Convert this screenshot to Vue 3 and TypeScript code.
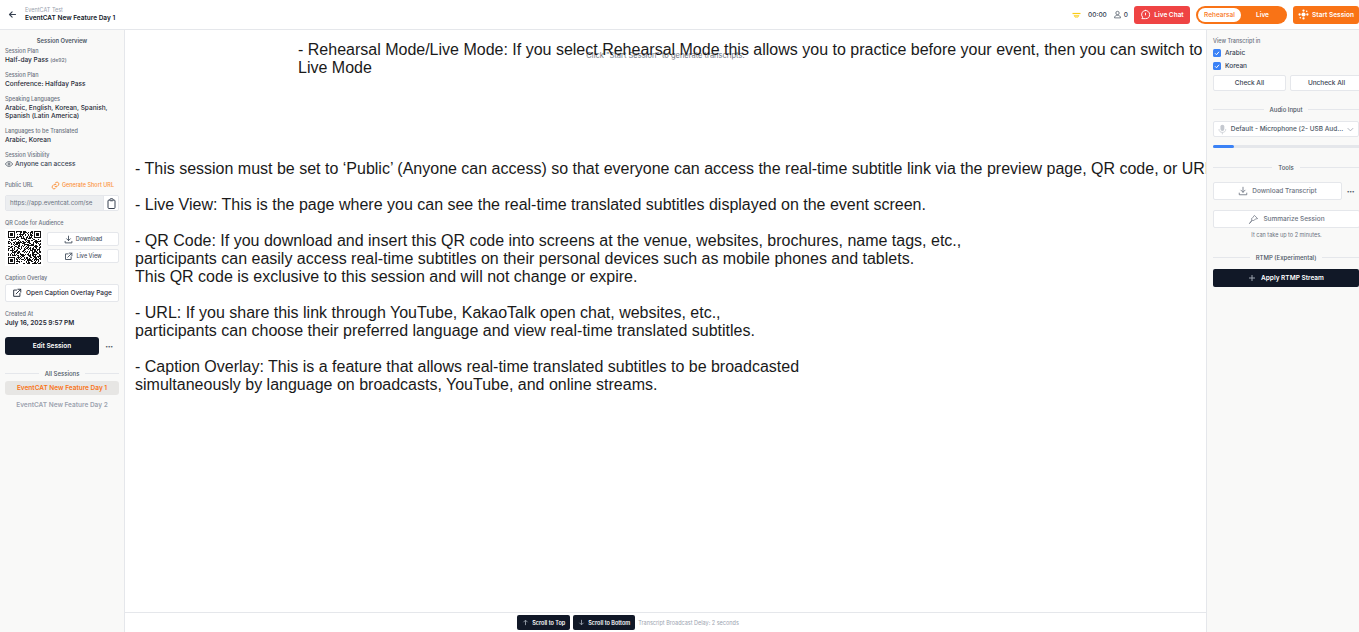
<script setup lang="ts">
const overview = [
  { label: 'Session Plan', value: 'Half-day Pass', note: '(de92)' },
  { label: 'Session Plan', value: 'Conference: Halfday Pass' },
  { label: 'Speaking Languages', value: 'Arabic, English, Korean, Spanish, Spanish (Latin America)' },
  { label: 'Languages to be Translated', value: 'Arabic, Korean' },
]

const sessions = ['EventCAT New Feature Day 1', 'EventCAT New Feature Day 2']
const transcriptLanguages = ['Arabic', 'Korean']

// not a real code, just something that reads as one at this size
const qrSize = 33

function inFinder(x: number, y: number, ox: number, oy: number) {
  return x >= ox && x < ox + 7 && y >= oy && y < oy + 7
}

function finderOn(x: number, y: number, ox: number, oy: number) {
  const dx = x - ox
  const dy = y - oy
  if (dx === 0 || dx === 6 || dy === 0 || dy === 6) return true
  return dx >= 2 && dx <= 4 && dy >= 2 && dy <= 4
}

const qrCells: Array<{ x: number; y: number }> = []
let seed = 92821
for (let y = 0; y < qrSize; y++) {
  for (let x = 0; x < qrSize; x++) {
    seed = (seed * 1103515245 + 12345) & 0x7fffffff
    let on = ((seed >> 16) & 3) < 2
    const finders: Array<[number, number]> = [[0, 0], [qrSize - 7, 0], [0, qrSize - 7]]
    for (const [ox, oy] of finders) {
      if (inFinder(x, y, ox, oy)) on = finderOn(x, y, ox, oy)
      else if (x >= ox - 1 && x <= ox + 7 && y >= oy - 1 && y <= oy + 7) on = false
    }
    if (on) qrCells.push({ x, y })
  }
}
</script>

<template>
  <div class="app">
    <header class="topbar">
      <button class="back" aria-label="Back">
        <svg width="9" height="9" viewBox="0 0 24 24" fill="none" stroke="#374151" stroke-width="3" stroke-linecap="round" stroke-linejoin="round"><path d="M20 12H4M11 5l-7 7 7 7" /></svg>
      </button>
      <div class="title">
        <span class="title__org">EventCAT Test</span>
        <strong class="title__name">EventCAT New Feature Day 1</strong>
      </div>
      <div class="topbar__right">
        <svg class="signal" width="9" height="6" viewBox="0 0 9 6"><path d="M0.5 1.5h8" stroke="#facc15" stroke-width="1.2" /><path d="M2 3.5h5L6 5.2H3z" fill="#fde68a" stroke="#facc15" stroke-width=".6" /></svg>
        <span class="timer">00:00</span>
        <span class="viewers">
          <svg width="9" height="9" viewBox="0 0 24 24" fill="none" stroke="#4b5563" stroke-width="2"><circle cx="12" cy="8" r="4.5" /><path d="M4 21c0-4.5 3.5-7 8-7s8 2.500 8 7z" /></svg>
          0
        </span>
        <button class="btn-chat">
          <svg width="11" height="11" viewBox="0 0 24 24" fill="none" stroke="#fff" stroke-width="2" stroke-linecap="round"><path d="M12 3a9 9 0 0 1 0 18H4l1.800-3A9 9 0 0 1 12 3z" /><path d="M12 9v4" /></svg>
          Live Chat
        </button>
        <div class="mode">
          <span class="mode__on">Rehearsal</span>
          <span class="mode__off">Live</span>
        </div>
        <button class="btn-start">
          <svg width="11" height="11" viewBox="0 0 24 24" fill="#fff"><circle cx="12" cy="12" r="4.500" /><circle cx="12" cy="3.500" r="2.500" /><circle cx="12" cy="20.500" r="2.500" /><circle cx="3.500" cy="12" r="2.500" /><circle cx="20.500" cy="12" r="2.500" /><circle cx="19" cy="5" r="1.800" /><circle cx="5" cy="19" r="1.800" /></svg>
          Start Session
        </button>
      </div>
    </header>

    <div class="body">
      <aside class="left">
        <h3 class="left__title">Session Overview</h3>

        <div v-for="(item, i) in overview" :key="i" class="info">
          <span class="label">{{ item.label }}</span>
          <p class="value">{{ item.value }} <small v-if="item.note">{{ item.note }}</small></p>
        </div>

        <div class="info">
          <span class="label">Session Visibility</span>
          <p class="value value--icon">
            <svg width="8" height="8" viewBox="0 0 24 24" fill="none" stroke="#4b5563" stroke-width="2.500"><path d="M1 12s4-7 11-7 11 7 11 7-4 7-11 7S1 12 1 12z" /><circle cx="12" cy="12" r="3" /></svg>
            Anyone can access
          </p>
        </div>

        <div class="url-head">
          <span class="label">Public URL</span>
          <span class="short-url">
            <svg width="9" height="9" viewBox="0 0 24 24" fill="none" stroke="#fb923c" stroke-width="2.500" stroke-linecap="round"><path d="M10 14a5 5 0 0 0 7 0l3-3a5 5 0 0 0-7-7l-1.500 1.500" /><path d="M14 10a5 5 0 0 0-7 0l-3 3a5 5 0 0 0 7 7l1.500-1.500" /></svg>
            Generate Short URL
          </span>
        </div>
        <div class="url-box">
          <span class="url-box__text">https://app.eventcat.com/se</span>
          <span class="url-box__copy">
            <svg width="9" height="11" viewBox="0 0 18 22" fill="none" stroke="#374151" stroke-width="2"><rect x="2" y="4" width="14" height="17" rx="2" /><rect x="6" y="1.500" width="6" height="4" rx="1" fill="#fff" /></svg>
          </span>
        </div>

        <span class="label label--qr">QR Code for Audience</span>
        <div class="qr-row">
          <div class="qr">
            <svg width="33" height="33" :viewBox="`0 0 ${qrSize} ${qrSize}`" shape-rendering="crispEdges">
              <rect v-for="(c, i) in qrCells" :key="i" :x="c.x" :y="c.y" width="1" height="1" fill="#111" />
            </svg>
          </div>
          <div class="qr-actions">
            <button class="btn-line">
              <svg width="9" height="9" viewBox="0 0 24 24" fill="none" stroke="#4b5563" stroke-width="2.500" stroke-linecap="round" stroke-linejoin="round"><path d="M12 3v12M7 10l5 5 5-5M3 17v4h18v-4" /></svg>
              Download
            </button>
            <button class="btn-line">
              <svg width="9" height="9" viewBox="0 0 24 24" fill="none" stroke="#4b5563" stroke-width="2.500" stroke-linecap="round" stroke-linejoin="round"><path d="M11 5H4v15h15v-7M10 14L21 3M14 3h7v7" /></svg>
              Live View
            </button>
          </div>
        </div>

        <span class="label label--caption">Caption Overlay</span>
        <button class="btn-line btn-overlay">
          <svg width="10" height="10" viewBox="0 0 24 24" fill="none" stroke="#1f2937" stroke-width="2.200" stroke-linecap="round" stroke-linejoin="round"><path d="M11 5H4v15h15v-7M10 14L21 3M14 3h7v7" /></svg>
          Open Caption Overlay Page
        </button>

        <span class="label label--created">Created At</span>
        <p class="value value--date">July 16, 2025 9:57 PM</p>

        <div class="edit-row">
          <button class="btn-dark btn-edit">Edit Session</button>
          <span class="dots">•••</span>
        </div>

        <div class="divider divider--sessions"><span>All Sessions</span></div>
        <ul class="sessions">
          <li v-for="(name, i) in sessions" :key="name" :class="{ active: i === 0 }">{{ name }}</li>
        </ul>
      </aside>

      <main class="main">
        <div class="transcript">
          <p class="hint">Click "Start Session" to generate transcripts.</p>
          <div class="copy">
            <p class="copy__first">- Rehearsal Mode/Live Mode: If you select Rehearsal Mode this allows you to practice before your event, then you can switch to Live Mode</p>
            <p>- This session must be set to ‘Public’ (Anyone can access) so that everyone can access the real-time subtitle link via the preview page, QR code, or URL.</p>
            <p>- Live View: This is the page where you can see the real-time translated subtitles displayed on the event screen.</p>
            <p>- QR Code: If you download and insert this QR code into screens at the venue, websites, brochures, name tags, etc.,<br />participants can easily access real-time subtitles on their personal devices such as mobile phones and tablets.<br />This QR code is exclusive to this session and will not change or expire.</p>
            <p>- URL: If you share this link through YouTube, KakaoTalk open chat, websites, etc.,<br />participants can choose their preferred language and view real-time translated subtitles.</p>
            <p>- Caption Overlay: This is a feature that allows real-time translated subtitles to be broadcasted<br />simultaneously by language on broadcasts, YouTube, and online streams.</p>
          </div>
        </div>
        <footer class="bottom">
          <button class="btn-dark btn-scroll">
            <svg width="7" height="7" viewBox="0 0 24 24" fill="none" stroke="#9ca3af" stroke-width="3"><path d="M12 21V4M5 11l7-7 7 7" /></svg>
            Scroll to Top
          </button>
          <button class="btn-dark btn-scroll">
            <svg width="7" height="7" viewBox="0 0 24 24" fill="none" stroke="#9ca3af" stroke-width="3"><path d="M12 3v17M5 13l7 7 7-7" /></svg>
            Scroll to Bottom
          </button>
          <span class="delay">Transcript Broadcast Delay: 2 seconds</span>
        </footer>
      </main>

      <aside class="right">
        <span class="label">View Transcript in</span>
        <label v-for="lang in transcriptLanguages" :key="lang" class="check">
          <span class="check__box">
            <svg width="6" height="6" viewBox="0 0 12 12" fill="none" stroke="#fff" stroke-width="2"><path d="M2 6.500l3 3 5-6" /></svg>
          </span>
          {{ lang }}
        </label>
        <div class="check-actions">
          <button class="btn-line btn-check">Check All</button>
          <button class="btn-line btn-check">Uncheck All</button>
        </div>

        <div class="divider divider--audio"><span>Audio Input</span></div>
        <div class="select">
          <svg width="9" height="11" viewBox="0 0 18 22" fill="#c4c8cf"><rect x="5" y="1" width="8" height="13" rx="4" /><path d="M2 10c0 5 3 7 7 7s7-2 7-7M9 17v4" fill="none" stroke="#c4c8cf" stroke-width="1.500" /></svg>
          <span class="select__text">Default - Microphone (2- USB Aud...</span>
          <svg width="7" height="5" viewBox="0 0 10 6" fill="none" stroke="#9ca3af" stroke-width="1.200"><path d="M1 1l4 4 4-4" /></svg>
        </div>
        <div class="meter"><div class="meter__fill" :style="{ width: '21px' }"></div></div>

        <div class="divider divider--tools"><span>Tools</span></div>
        <div class="download-row">
          <button class="btn-line btn-tool">
            <svg width="10" height="10" viewBox="0 0 24 24" fill="none" stroke="#6b7280" stroke-width="2" stroke-linecap="round" stroke-linejoin="round"><path d="M12 3v12M7 10l5 5 5-5M3 17v4h18v-4" /></svg>
            Download Transcript
          </button>
          <span class="dots">•••</span>
        </div>
        <button class="btn-line btn-tool btn-summary">
          <svg width="11" height="11" viewBox="0 0 24 24" fill="none" stroke="#6b7280" stroke-width="1.600" stroke-linejoin="round"><path d="M14 3l7 7-5 1-4 4-2-2-7 8 6-8-2-2 4-4z" /></svg>
          Summarize Session
        </button>
        <p class="note">It can take up to 2 minutes.</p>

        <div class="divider divider--rtmp"><span>RTMP (Experimental)</span></div>
        <button class="btn-dark btn-rtmp">
          <svg width="8" height="8" viewBox="0 0 24 24" fill="none" stroke="#9ca3af" stroke-width="3"><path d="M12 3v18M3 12h18" /></svg>
          Apply RTMP Stream
        </button>
      </aside>
    </div>
  </div>
</template>

<style>
html,
body {
  margin: 0;
  overflow: hidden;
  background: #fff;
}
</style>

<style scoped>
.app {
  display: flex;
  flex-direction: column;
  width: 1359px;
  height: 632px;
  overflow: hidden;
  color: #1f2937;
  font-family: Inter, "Liberation Sans", sans-serif;
}

button {
  font-family: inherit;
  cursor: pointer;
}

p,
h3,
ul {
  margin: 0;
  padding: 0;
}

.topbar {
  display: flex;
  flex: none;
  align-items: center;
  height: 29px;
  border-bottom: 1px solid #e5e7eb;
  box-sizing: content-box;
  height: 29px;
  background: #fff;
}

.back {
  display: flex;
  align-items: center;
  margin-left: 8px;
  padding: 0;
  border: 0;
  background: none;
}

.title {
  display: flex;
  flex-direction: column;
  margin-left: 8px;
}

.title__org {
  color: #9ca3af;
  font-size: 5.5px;
  line-height: 8px;
}

.title__name {
  color: #111827;
  font-size: 6.5px;
  font-weight: 600;
  line-height: 9px;
}

.topbar__right {
  display: flex;
  align-items: center;
  margin-left: auto;
}

.timer {
  margin-left: 7px;
  color: #374151;
  font-size: 6.5px;
  font-weight: 500;
}

.viewers {
  display: flex;
  align-items: center;
  gap: 2px;
  margin-left: 6px;
  color: #374151;
  font-size: 6.5px;
  font-weight: 500;
}

.btn-chat,
.btn-start {
  display: flex;
  align-items: center;
  justify-content: center;
  gap: 3px;
  height: 18px;
  padding: 0;
  border: 0;
  border-radius: 3px;
  color: #fff;
  font-size: 6.5px;
  font-weight: 600;
}

.btn-chat {
  width: 56px;
  margin-left: 6px;
  background: #ef4444;
}

.btn-start {
  width: 66px;
  margin-left: 6px;
  background: #f97316;
}

.mode {
  display: flex;
  align-items: center;
  width: 91px;
  height: 18px;
  margin-left: 6px;
  border-radius: 9px;
  background: #f97316;
  font-size: 6.5px;
  font-weight: 500;
}

.mode__on {
  width: 43px;
  height: 14px;
  margin-left: 2px;
  border-radius: 7px;
  background: #fff;
  color: #f97316;
  line-height: 14px;
  text-align: center;
}

.mode__off {
  flex: 1;
  padding-right: 3px;
  color: #fff;
  font-weight: 600;
  text-align: center;
}

.body {
  display: flex;
  flex: 1;
  min-height: 0;
}

.left,
.right {
  display: flex;
  flex: none;
  flex-direction: column;
  box-sizing: border-box;
  background: #f9f9f8;
  overflow: hidden;
}

.left {
  width: 125px;
  padding: 7px 5px 0;
  border-right: 1px solid #e5e7eb;
}

.left__title {
  color: #4b5563;
  font-size: 5.8px;
  font-weight: 600;
  line-height: 8px;
  text-align: center;
}

.label {
  color: #6b7280;
  font-size: 5.5px;
  font-weight: 500;
  line-height: 8px;
}

.info {
  display: flex;
  flex-direction: column;
  gap: 1px;
  margin-top: 6px;
  margin-bottom: 7px;
}

.left__title + .info {
  margin-top: 2px;
}

.value {
  color: #1f2937;
  font-size: 6.5px;
  font-weight: 500;
  line-height: 8px;
}

.info + .info {
  margin-top: 0;
  margin-bottom: 7px;
}

.value small {
  color: #6b7280;
  font-size: 5.2px;
}

.value--icon {
  display: flex;
  align-items: center;
  gap: 2px;
  color: #374151;
}

.url-head {
  display: flex;
  align-items: center;
  justify-content: space-between;
  height: 8px;
  margin-top: 6px;
  padding-right: 5px;
}

.short-url {
  display: flex;
  align-items: center;
  gap: 2px;
  color: #fb923c;
  font-size: 5.5px;
  font-weight: 500;
}

.url-box {
  display: flex;
  flex: none;
  height: 16px;
  margin-top: 6px;
  overflow: hidden;
  border: 1px solid #e5e7eb;
  border-radius: 2px;
  box-sizing: border-box;
}

.url-box__text {
  flex: 1;
  padding-left: 4px;
  background: #eceef0;
  color: #6b7280;
  font-size: 6.2px;
  line-height: 14px;
  white-space: nowrap;
  overflow: hidden;
}

.url-box__copy {
  display: flex;
  flex: none;
  align-items: center;
  justify-content: center;
  width: 14px;
  border-left: 1px solid #e5e7eb;
  background: #fff;
}

.label--qr {
  margin-top: 8px;
}

.qr-row {
  display: flex;
  flex: none;
  gap: 4px;
  margin-top: 2px;
}

.qr {
  display: flex;
  flex: none;
  align-items: center;
  justify-content: center;
  width: 38px;
  height: 37px;
  background: #fff;
}

.qr-actions {
  display: flex;
  flex: 1;
  flex-direction: column;
  gap: 3px;
  padding-top: 3px;
}

.btn-line {
  display: flex;
  align-items: center;
  justify-content: center;
  gap: 3px;
  box-sizing: border-box;
  padding: 0;
  border: 1px solid #e5e7eb;
  border-radius: 2px;
  background: #fff;
  color: #4b5563;
  font-size: 5.5px;
  font-weight: 500;
}

.qr-actions .btn-line {
  height: 14px;
}

.label--caption {
  margin-top: 8px;
}

.btn-overlay {
  flex: none;
  gap: 4px;
  height: 18px;
  margin-top: 2px;
  color: #1f2937;
  font-size: 6.5px;
}

.label--created {
  margin-top: 8px;
}

.value--date {
  margin-top: 1px;
  font-weight: 600;
}

.edit-row {
  display: flex;
  flex: none;
  align-items: center;
  margin-top: 10px;
}

.btn-dark {
  display: flex;
  align-items: center;
  justify-content: center;
  border: 0;
  background: #111827;
  color: #fff;
  font-weight: 600;
}

.btn-edit {
  width: 94px;
  height: 18px;
  padding: 0;
  border-radius: 3px;
  font-size: 6.5px;
}

.dots {
  flex: 1;
  color: #4b5563;
  font-size: 5px;
  letter-spacing: -.3px;
  text-align: center;
}

.divider {
  display: flex;
  flex: none;
  align-items: center;
  gap: 6px;
  height: 8px;
  color: #4b5563;
  font-size: 6px;
  font-weight: 500;
}

.divider::before,
.divider::after {
  flex: 1;
  height: 1px;
  background: #e5e7eb;
  content: "";
}

.divider--sessions {
  margin-top: 14px;
}

.sessions {
  margin-top: 4px;
  list-style: none;
}

.sessions li {
  height: 14px;
  margin-bottom: 3px;
  border-radius: 3px;
  color: #9ca3af;
  font-size: 6.5px;
  font-weight: 600;
  line-height: 14px;
  text-align: center;
}

.sessions li.active {
  background: #e7e6e4;
  color: #f97316;
}

.main {
  display: flex;
  flex: 1;
  flex-direction: column;
  min-width: 0;
  background: #fff;
}

.transcript {
  position: relative;
  flex: 1;
  min-height: 0;
  overflow: hidden;
}

.hint {
  position: absolute;
  top: 21px;
  left: 0;
  width: 1081px;
  color: #6b7280;
  font-size: 7.500px;
  line-height: 10px;
  text-align: center;
}

.copy {
  position: relative;
  padding: 11px 0 0 10px;
  color: #1a1a1a;
  font-family: "Liberation Sans", Arial, sans-serif;
  font-size: 16px;
  line-height: 18px;
}

.copy p {
  margin-bottom: 18px;
  white-space: nowrap;
}

.copy .copy__first {
  width: 920px;
  margin-bottom: 83px;
  margin-left: 163px;
  white-space: normal;
}

.bottom {
  display: flex;
  flex: none;
  align-items: center;
  justify-content: center;
  gap: 3px;
  height: 20px;
  box-sizing: border-box;
  padding-right: 75px;
  border-top: 1px solid #e5e7eb;
}

.btn-scroll {
  gap: 3px;
  height: 15px;
  padding: 0 5px;
  border-radius: 2px;
  font-size: 5.5px;
  white-space: nowrap;
}

.delay {
  color: #9ca3af;
  font-size: 5.5px;
  white-space: nowrap;
}

.right {
  width: 153px;
  padding: 7px 0 0 6px;
  border-left: 1px solid #e5e7eb;
}

.check {
  display: flex;
  flex: none;
  align-items: center;
  gap: 4px;
  height: 13px;
  color: #374151;
  font-size: 6.500px;
  font-weight: 500;
}

.check:first-of-type {
  margin-top: 1px;
}

.check__box {
  display: flex;
  align-items: center;
  justify-content: center;
  width: 8px;
  height: 8px;
  border-radius: 1.500px;
  background: #3b82f6;
}

.check-actions {
  display: flex;
  flex: none;
  gap: 4px;
  width: 153px;
  margin-top: 3px;
}

.btn-check {
  width: 73px;
  height: 16px;
  color: #374151;
  font-size: 6.500px;
}

.divider--audio {
  margin-top: 14px;
  padding-right: 0;
}

.select {
  display: flex;
  flex: none;
  align-items: center;
  gap: 4px;
  height: 16px;
  margin-top: 8px;
  padding: 0 4px;
  border: 1px solid #e5e7eb;
  border-radius: 2px;
  box-sizing: border-box;
  background: #fff;
  color: #4b5563;
  font-size: 6.500px;
  font-weight: 500;
  white-space: nowrap;
}

.select__text {
  flex: 1;
}

.meter {
  flex: none;
  height: 3px;
  margin-top: 8px;
  background: #e5e7eb;
}

.meter__fill {
  height: 100%;
  border-radius: 2px;
  background: #3b82f6;
}

.divider--tools {
  margin-top: 15px;
}

.download-row {
  display: flex;
  flex: none;
  align-items: center;
  margin-top: 11px;
}

.btn-tool {
  flex: none;
  gap: 4px;
  width: 129px;
  height: 18px;
  color: #6b7280;
  font-size: 6.500px;
}

.btn-summary {
  width: 147px;
  margin-top: 10px;
}

.note {
  flex: none;
  width: 147px;
  margin-top: 3px;
  color: #6b7280;
  font-size: 5.500px;
  line-height: 8px;
  text-align: center;
}

.divider--rtmp {
  margin-top: 14px;
}

.btn-rtmp {
  flex: none;
  gap: 5px;
  height: 18px;
  margin-top: 8px;
  padding: 0;
  border-radius: 2px;
  font-size: 6.500px;
}
</style>
